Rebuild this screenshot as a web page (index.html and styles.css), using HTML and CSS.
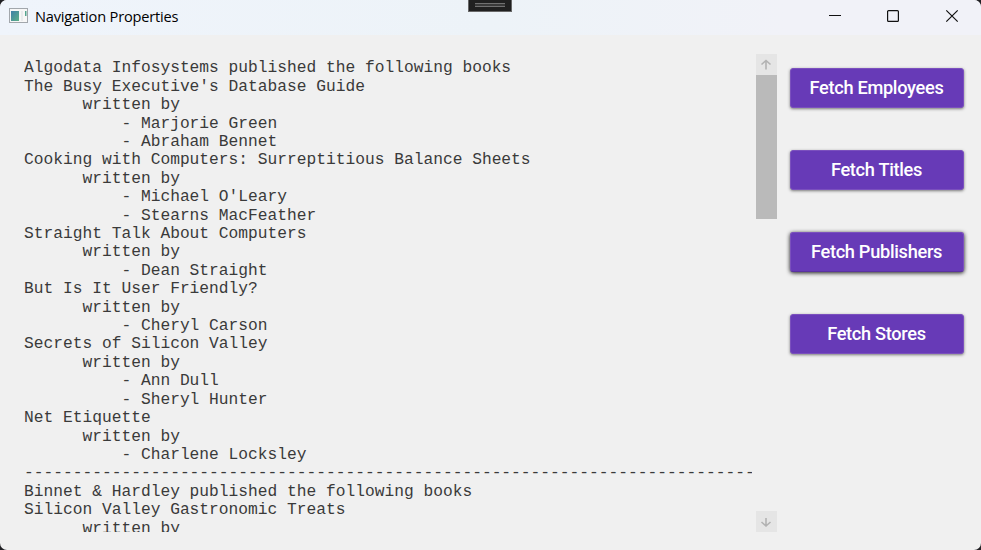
FILE: index.html
```html
<!DOCTYPE html>
<html lang="en">
<head>
<meta charset="utf-8">
<title>Navigation Properties</title>
<link rel="stylesheet" href="styles.css">
</head>
<body>
<div class="window">
  <header class="titlebar">
    <svg class="app-icon" width="20" height="16" viewBox="0 0 20 16">
      <defs><linearGradient id="pane" x1="0" y1="0" x2="1" y2="1"><stop offset="0" stop-color="#3f7fa8"/><stop offset="1" stop-color="#5db087"/></linearGradient></defs>
      <rect x=".5" y=".5" width="18" height="14" fill="#f7f7f7" stroke="#a2a7ac"/>
      <rect x="2" y="3" width="8" height="10" fill="url(#pane)"/>
      <path d="M12 3h2v10h-2z" fill="#e9ebed"/>
      <path d="M16 3h1.500v5H16z" fill="#55a58f"/>
    </svg>
    <h1 class="title">Navigation Properties</h1>
    <svg class="controls" width="130" height="14" viewBox="0 0 130 14" fill="none" stroke="#111" stroke-width="1.2">
      <path d="M0 6.500h12"/>
      <rect x="58.600" y="1.600" width="10.800" height="10.800" rx="1"/>
      <path d="M117.300 1.300l11.400 11.400M128.700 1.300l-11.400 11.400"/>
    </svg>
    <div class="grip"><span></span></div>
  </header>
  <main class="content">
    <pre class="output">Algodata Infosystems published the following books
The Busy Executive's Database Guide
      written by
          - Marjorie Green
          - Abraham Bennet
Cooking with Computers: Surreptitious Balance Sheets
      written by
          - Michael O'Leary
          - Stearns MacFeather
Straight Talk About Computers
      written by
          - Dean Straight
But Is It User Friendly?
      written by
          - Cheryl Carson
Secrets of Silicon Valley
      written by
          - Ann Dull
          - Sheryl Hunter
Net Etiquette
      written by
          - Charlene Locksley
---------------------------------------------------------------------------
Binnet &amp; Hardley published the following books
Silicon Valley Gastronomic Treats
      written by</pre>
    <div class="scrollbar">
      <div class="arrow"><svg width="21" height="21" viewBox="0 0 21 21"><path d="M10 15.500V7M5.500 10.500L10 6.500l4.500 4"/></svg></div>
      <div class="thumb"></div>
      <div class="arrow arrow-down"><svg width="21" height="21" viewBox="0 0 21 21"><path d="M10 7v8M5.500 11L10 15l4.500-4"/></svg></div>
    </div>
    <nav class="actions">
      <button class="action">Fetch Employees</button>
      <button class="action">Fetch Titles</button>
      <button class="action focused">Fetch Publishers</button>
      <button class="action">Fetch Stores</button>
    </nav>
  </main>
</div>
</body>
</html>
```
FILE: styles.css
```css
* { box-sizing: border-box; }
body { margin: 0; background: #202024; overflow: hidden; }
.window {
  width: 981px;
  height: 550px;
  display: flex;
  flex-direction: column;
  background: #f0f0f0;
  border-radius: 7px;
  overflow: hidden;
}
.titlebar {
  position: relative;
  height: 35px;
  flex: none;
  display: flex;
  align-items: flex-start;
  padding: 8px 22px 0 9px;
  background: linear-gradient(90deg, #eff4fb, #edf3f8 50%, #f1f2f8 80%);
}
.title {
  margin: -3px 0 0 6px;
  font: 400 14.6px/22px "Open Sans", sans-serif;
  color: #000;
  letter-spacing: -0.18px;
}
.controls { margin: 1px 0 0 auto; }
.grip {
  position: absolute;
  left: 468px;
  top: 0;
  width: 44px;
  height: 12px;
  padding: 3px 6px 0;
  background: #202020;
  border: 1px solid #686868;
  border-top: 0;
}
.grip span {
  display: block;
  height: 4px;
  background: #393939;
  border: solid #707070;
  border-width: 1px 0;
}
.content { flex: 1; display: flex; align-items: flex-start; padding: 19px 17.5px 0 24px; }
.output {
  margin: 0;
  width: 728px;
  height: 478px;
  padding-top: 5.4px;
  overflow: hidden;
  font: 16.24px/18.41px "Courier New", "Liberation Mono", monospace;
  color: #3a3a3a;
}
.scrollbar { width: 21px; height: 478px; margin-left: 4px; display: flex; flex-direction: column; }
.arrow { height: 21px; background: #e5e5e5; flex: none; }
.arrow svg { display: block; fill: none; stroke: #b2b2b2; stroke-width: 1.6; }
.arrow-down { margin-top: auto; }
.thumb { height: 144px; background: #bababa; }
.actions { flex: 1; display: flex; flex-direction: column; gap: 42px; padding: 14px 0 0 12.5px; }
.action {
  height: 40px;
  padding: 0;
  border: 1px solid #7b50be;
  border-radius: 3px;
  background: #673ab7;
  color: #fff;
  font: 500 18.2px/38px Roboto, sans-serif;
  letter-spacing: -0.3px;
  box-shadow: 0 1px 3px rgba(0, 0, 0, 0.5);
}
.focused { border-bottom-color: #5a329f; box-shadow: 0 1px 4px rgba(0, 0, 0, 0.9); }
```
